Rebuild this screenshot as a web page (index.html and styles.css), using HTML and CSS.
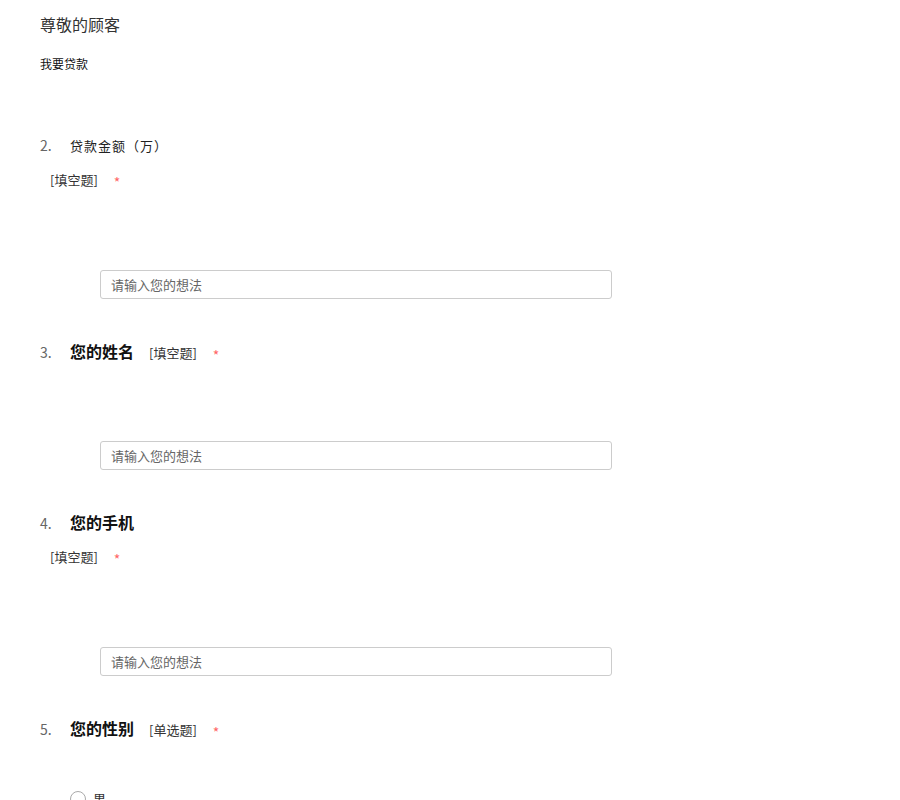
FILE: index.html
```html
<!DOCTYPE html>
<html lang="zh-CN">
<head>
    <meta charset="UTF-8">
    <meta name="viewport" content="width=device-width, initial-scale=1.0">
    <title>我要贷款</title>
    <link rel="stylesheet" href="styles.css">
</head>
<body>
    <div class="survey">
        <div class="header">
            <h1>尊敬的顾客</h1>
            <p>我要贷款</p>
        </div>

        <div class="question">
            <div class="q-title">
                <span class="num">2.</span>
                <span class="text small">贷款金额（万）</span>
            </div>
            <div class="q-tag">
                <span class="tag">[填空题]</span>
                <span class="req">*</span>
            </div>
            <input class="answer" type="text" placeholder="请输入您的想法">
        </div>

        <div class="question">
            <div class="q-title">
                <span class="num">3.</span>
                <span class="text">您的姓名</span>
                <span class="tag">[填空题]</span>
                <span class="req">*</span>
            </div>
            <input class="answer" type="text" placeholder="请输入您的想法">
        </div>

        <div class="question">
            <div class="q-title">
                <span class="num">4.</span>
                <span class="text">您的手机</span>
            </div>
            <div class="q-tag">
                <span class="tag">[填空题]</span>
                <span class="req">*</span>
            </div>
            <input class="answer" type="text" placeholder="请输入您的想法">
        </div>

        <div class="question">
            <div class="q-title">
                <span class="num">5.</span>
                <span class="text">您的性别</span>
                <span class="tag">[单选题]</span>
                <span class="req">*</span>
            </div>
            <div class="options">
                <label class="option"><span class="radio"></span>男</label>
            </div>
        </div>
    </div>
</body>
</html>
```

FILE: styles.css
```css
body {
    margin: 0;
    font-family: "Noto Sans CJK SC", "Noto Sans", sans-serif;
    color: #333;
    background: #fff;
}
.survey {
    padding: 12px 0 0 40px;
}
.header h1 {
    margin: 0;
    font-size: 16px;
    font-weight: normal;
    line-height: 24px;
    color: #333;
}
.header p {
    margin: 19px 0 0;
    font-size: 12px;
    line-height: 18px;
    color: #111;
}
.question {
    margin-top: 40px;
}
.header + .question {
    margin-top: 60px;
}
.q-title {
    display: flex;
    align-items: baseline;
    line-height: 24px;
    height: 24px;
}
.num {
    width: 30px;
    font-size: 14px;
    color: #666;
}
.text {
    font-size: 16px;
    font-weight: bold;
    color: #111;
    margin-right: 15px;
}
.text.small {
    font-size: 13px;
    font-weight: normal;
    color: #222;
    letter-spacing: 1px;
}
.tag {
    font-size: 13px;
    color: #333;
    margin-right: 16px;
}
.req {
    font-size: 14px;
    color: #f66;
    transform: translateY(3px);
}
.q-tag {
    display: flex;
    align-items: baseline;
    line-height: 24px;
    margin-top: 10px;
    padding-left: 10px;
}
.answer {
    display: block;
    box-sizing: border-box;
    width: 512px;
    height: 29px;
    margin: 78px 0 0 60px;
    padding: 0 10px;
    border: 1px solid #ccc;
    border-radius: 3px;
    font-family: inherit;
    font-size: 13px;
    color: #333;
    outline: none;
}
.answer::placeholder {
    color: #666;
}
.options {
    margin-top: 49px;
    padding-left: 30px;
}
.option {
    display: flex;
    align-items: center;
    gap: 7px;
    font-size: 13px;
    color: #333;
}
.radio {
    width: 14px;
    height: 14px;
    border: 1px solid #aaa;
    border-radius: 50%;
}
```
